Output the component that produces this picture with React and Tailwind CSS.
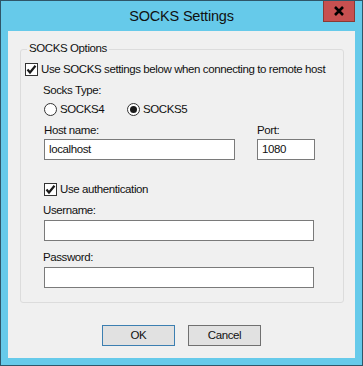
import React from 'react';

const font = { fontFamily: '"Liberation Sans", Arial, sans-serif' };

function CheckBox({ label }) {
  return (
    <div className="flex items-center h-[15px] whitespace-nowrap">
      <span className="w-[13px] h-[13px] border border-[#333333] bg-white flex items-center justify-center shrink-0">
        <svg width="11" height="11" viewBox="0 0 11 11">
          <path d="M1.5 5.5 L4 8.5 L9.5 1.8" fill="none" stroke="#1a1a1a" strokeWidth="2.2" />
        </svg>
      </span>
      <span className="ml-[3px] leading-[15px]">{label}</span>
    </div>
  );
}

function Radio({ label, checked }) {
  return (
    <div className="flex items-center h-[15px] whitespace-nowrap">
      <span className="w-[13px] h-[13px] rounded-full border border-[#333333] bg-white flex items-center justify-center shrink-0">
        {checked && <span className="w-[7px] h-[7px] rounded-full bg-[#1a1a1a]" />}
      </span>
      <span className="ml-[3px] leading-[15px]">{label}</span>
    </div>
  );
}

function TextBox({ value, className }) {
  return (
    <div className={`h-[21px] border border-[#7a7a7a] bg-white px-[4px] leading-[19px] ${className}`}>
      {value}
    </div>
  );
}

export default function App() {
  return (
    <div
      className="relative w-[363px] h-[366px] border border-[#2f5669] bg-[#66caea] flex flex-col text-[11.5px] tracking-[-0.4px] text-[#111111]"
      style={font}
    >
      <div className="h-[30px] flex items-center justify-center text-[14.5px] tracking-[-0.2px] pt-[1px]">SOCKS Settings</div>
      <button className="absolute top-0 left-[322px] w-[32px] h-[21px] bg-[#c75050] border border-[#8a3a34] border-t-0 flex items-center justify-center">
        <svg width="12" height="10" viewBox="0 0 12 10">
          <path d="M2 1 L10 9 M10 1 L2 9" stroke="#000" strokeWidth="2.6" />
        </svg>
      </button>

      <div className="mx-[7px] mb-[7px] flex-1 bg-[#f0f0f0] flex flex-col">
        <div className="relative mt-[18px] ml-[12px] w-[324px] h-[254px] border border-[#dcdcdc] rounded-[3px] px-[4px]">
          <span className="absolute -top-[9px] left-[6px] px-[2px] bg-[#f0f0f0] leading-[15px] whitespace-nowrap">SOCKS Options</span>

          <div className="mt-[12px]">
            <CheckBox label="Use SOCKS settings below when connecting to remote host" />
          </div>

          <div className="ml-[18px]">
            <div className="mt-[6px] leading-[15px]">Socks Type:</div>
            <div className="mt-[4px] flex">
              <div className="w-[83px] ml-[1px]">
                <Radio label="SOCKS4" />
              </div>
              <Radio label="SOCKS5" checked />
            </div>

            <div className="mt-[6px] flex">
              <div className="flex flex-col ml-[1px]">
                <div className="leading-[15px]">Host name:</div>
                <TextBox value="localhost" className="mt-[1px] w-[191px]" />
              </div>
              <div className="flex flex-col ml-[22px]">
                <div className="leading-[15px]">Port:</div>
                <TextBox value="1080" className="mt-[1px] w-[58px]" />
              </div>
            </div>

            <div className="mt-[22px] ml-[1px]">
              <CheckBox label="Use authentication" />
            </div>

            <div className="mt-[6px] leading-[15px]">Username:</div>
            <TextBox value="" className="mt-[2px] ml-[1px] w-[270px]" />

            <div className="mt-[9px] leading-[15px]">Password:</div>
            <TextBox value="" className="mt-[2px] ml-[1px] w-[270px]" />
          </div>
        </div>

        <div className="mt-[22px] flex justify-center gap-[13px]">
          <button className="w-[73px] h-[21px] border border-[#3c7fb1] bg-[#e1e1e1] leading-[19px]">OK</button>
          <button className="w-[73px] h-[21px] border border-[#707070] bg-[#e1e1e1] leading-[19px]">Cancel</button>
        </div>
      </div>
    </div>
  );
}
